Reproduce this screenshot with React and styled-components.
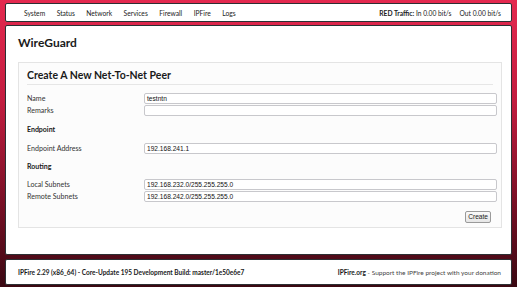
import React from 'react';
import styled, { createGlobalStyle } from 'styled-components';

const Global = createGlobalStyle`
  html, body { margin: 0; padding: 0; }
  body {
    width: 517px;
    height: 287px;
    overflow: hidden;
    background: linear-gradient(180deg, #e4294f 0%, #c21d40 35%, #7a1026 70%, #3a0812 100%);
    font-family: Lato, "Open Sans", sans-serif;
    color: #1a1a1a;
  }
`;

const Page = styled.div`
  display: flex;
  flex-direction: column;
  padding: 3px 5px;
`;

const Panel = styled.div`
  background: #fff;
  border: 1px solid #2c2f33;
  border-radius: 2px;
  box-sizing: border-box;
  color: #1a1a1a;
`;

const Nav = styled(Panel)`
  height: 19px;
  display: flex;
  align-items: center;
  padding: 0 10px 0 18px;
  font-size: 6.7px;
`;

const NavLinks = styled.div`
  display: flex;
  gap: 11.5px;
  flex: 1;
`;

const Traffic = styled.div`
  display: flex;
  gap: 8px;
  b { font-weight: 700; }
`;

const Main = styled(Panel)`
  margin-top: 3px;
  height: 230px;
  padding: 10px 9px 0 12px;
`;

const PageTitle = styled.h1`
  margin: 0 0 12px;
  font-size: 12px;
  font-weight: 700;
  line-height: 14px;
`;

const Box = styled.div`
  border: 1px solid #e4e4e4;
  background: #fcfcfc;
  height: 166px;
  box-sizing: border-box;
  padding: 5px 4px 0 8px;
`;

const BoxTitle = styled.h2`
  margin: 0 4px 7px 0;
  padding-bottom: 2px;
  border-bottom: 1px solid #e6e6e6;
  font-size: 10.5px;
  font-weight: 700;
  line-height: 14px;
`;

const Row = styled.div`
  display: grid;
  grid-template-columns: 117px 1fr;
  align-items: center;
  height: 12px;
  margin-bottom: ${p => p.gap || 0}px;
`;

const Label = styled.span`
  font-size: 7.1px;
  color: #333;
`;

const Section = styled.div`
  font-size: 7px;
  font-weight: 700;
  height: 12px;
  display: flex;
  align-items: center;
  margin-bottom: ${p => p.gap || 0}px;
`;

const Input = styled.div`
  height: 11px;
  box-sizing: border-box;
  border: 1px solid #c8c8cc;
  border-radius: 2px;
  background: #fff;
  font-family: "Liberation Sans", Arial, sans-serif;
  font-size: 6.6px;
  line-height: 9px;
  padding: 0 2px;
  color: #111;
`;

const Actions = styled.div`
  display: flex;
  justify-content: flex-end;
  margin-top: 9px;
  padding-right: 6px;
`;

const Button = styled.div`
  font-family: "Liberation Sans", Arial, sans-serif;
  font-size: 6.6px;
  border: 1px solid #9a9a9a;
  border-radius: 2px;
  background: linear-gradient(#fafafa, #e6e6e6);
  padding: 1px 2px;
  line-height: 8px;
`;

const Footer = styled(Panel)`
  margin-top: 4px;
  height: 26px;
  display: flex;
  align-items: center;
  justify-content: space-between;
  padding: 0 10px 0 12px;
  font-size: 6.5px;
  b { font-weight: 700; }
`;

const Muted = styled.span`
  color: #444;
`;

export default function App() {
  const links = ['System', 'Status', 'Network', 'Services', 'Firewall', 'IPFire', 'Logs'];
  return (
    <>
      <Global />
      <Page>
        <Nav>
          <NavLinks>
            {links.map(l => <span key={l}>{l}</span>)}
          </NavLinks>
          <Traffic>
            <span><b>RED Traffic:</b> In 0.00 bit/s</span>
            <span>Out 0.00 bit/s</span>
          </Traffic>
        </Nav>
        <Main>
          <PageTitle>WireGuard</PageTitle>
          <Box>
            <BoxTitle>Create A New Net-To-Net Peer</BoxTitle>
            <Row><Label>Name</Label><Input>testntn</Input></Row>
            <Row gap={7}><Label>Remarks</Label><Input /></Row>
            <Section gap={7}>Endpoint</Section>
            <Row gap={6}><Label>Endpoint Address</Label><Input>192.168.241.1</Input></Row>
            <Section gap={6}>Routing</Section>
            <Row><Label>Local Subnets</Label><Input>192.168.232.0/255.255.255.0</Input></Row>
            <Row><Label>Remote Subnets</Label><Input>192.168.242.0/255.255.255.0</Input></Row>
            <Actions><Button>Create</Button></Actions>
          </Box>
        </Main>
        <Footer>
          <b>IPFire 2.29 (x86_64) - Core-Update 195 Development Build: master/1e50e6e7</b>
          <span><b>IPFire.org</b> <Muted>- Support the IPFire project with your donation</Muted></span>
        </Footer>
      </Page>
    </>
  );
}
